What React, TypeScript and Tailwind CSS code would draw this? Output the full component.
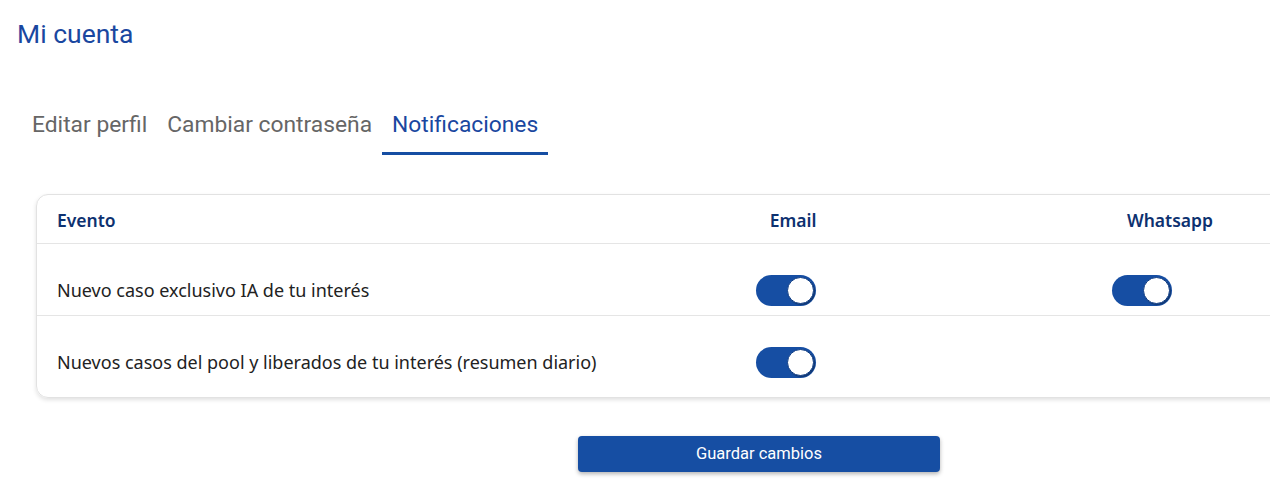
import React from 'react';

const rows = [
  { id: 1, label: 'Nuevo caso exclusivo IA de tu interés', email: true, whatsapp: true },
  { id: 2, label: 'Nuevos casos del pool y liberados de tu interés (resumen diario)', email: true, whatsapp: null },
];

const Toggle: React.FC<{ on: boolean }> = ({ on }) => (
  <div className={`relative w-[60px] h-[31px] rounded-full ${on ? 'bg-[#164ea3]' : 'bg-gray-300'}`}>
    <div className="absolute right-[2px] top-[2px] w-[27px] h-[27px] rounded-full bg-white border border-[#0f3d85] shadow-[1px_1px_1px_rgba(0,0,0,0.3)]" />
  </div>
);

export default function App() {
  return (
    <div className="w-[1270px] h-[498px] overflow-hidden bg-white font-['Roboto',sans-serif]">
      <h1 className="pl-[17px] pt-[19px] text-[26.5px] leading-[30px] text-[#1a47a0]">Mi cuenta</h1>

      <div className="flex pl-[22px] mt-[62px]">
        <div className="px-[10px] pb-[16px] text-[22.8px] leading-[28px] text-[#666]">Editar perfil</div>
        <div className="px-[10px] pb-[16px] text-[22.8px] leading-[28px] text-[#666]">Cambiar contraseña</div>
        <div className="px-[10px] pb-[13px] text-[22.8px] leading-[28px] text-[#1a47a0] border-b-[3px] border-[#164ea3]">Notificaciones</div>
      </div>

      <div className="ml-[36px] mt-[39px] w-[1330px] rounded-[12px] border border-[#e2e2e2] shadow-[0_2px_4px_rgba(0,0,0,0.12)] font-['Noto_Sans',sans-serif]">
        <div className="grid grid-cols-[566px_380px_374px] items-center h-[49px] pt-[3px] border-b border-[#e5e5e5] text-[17.5px] font-semibold text-[#0d3170]">
          <div className="pl-[20px]">Evento</div>
          <div className="text-center">Email</div>
          <div className="text-center">Whatsapp</div>
        </div>
        {rows.map((row, i) => (
          <div
            key={row.id}
            className={`grid grid-cols-[566px_380px_374px] items-center pt-[31px] ${i < rows.length - 1 ? 'pb-[9px] border-b border-[#e5e5e5]' : 'pb-[19px]'}`}
          >
            <div className="pl-[20px] text-[18px] leading-[27px] text-[#222]">{row.label}</div>
            <div className="flex pl-[153px]">{row.email !== null && <Toggle on={row.email} />}</div>
            <div className="flex pl-[129px]">{row.whatsapp !== null && <Toggle on={row.whatsapp} />}</div>
          </div>
        ))}
      </div>

      <div className="pl-[578px] mt-[38px]">
        <button className="w-[362px] h-[36px] rounded-[4px] bg-[#164ea3] text-white text-[16.5px] font-normal shadow-[0_2px_4px_rgba(0,0,0,0.3)]">
          Guardar cambios
        </button>
      </div>
    </div>
  );
}
